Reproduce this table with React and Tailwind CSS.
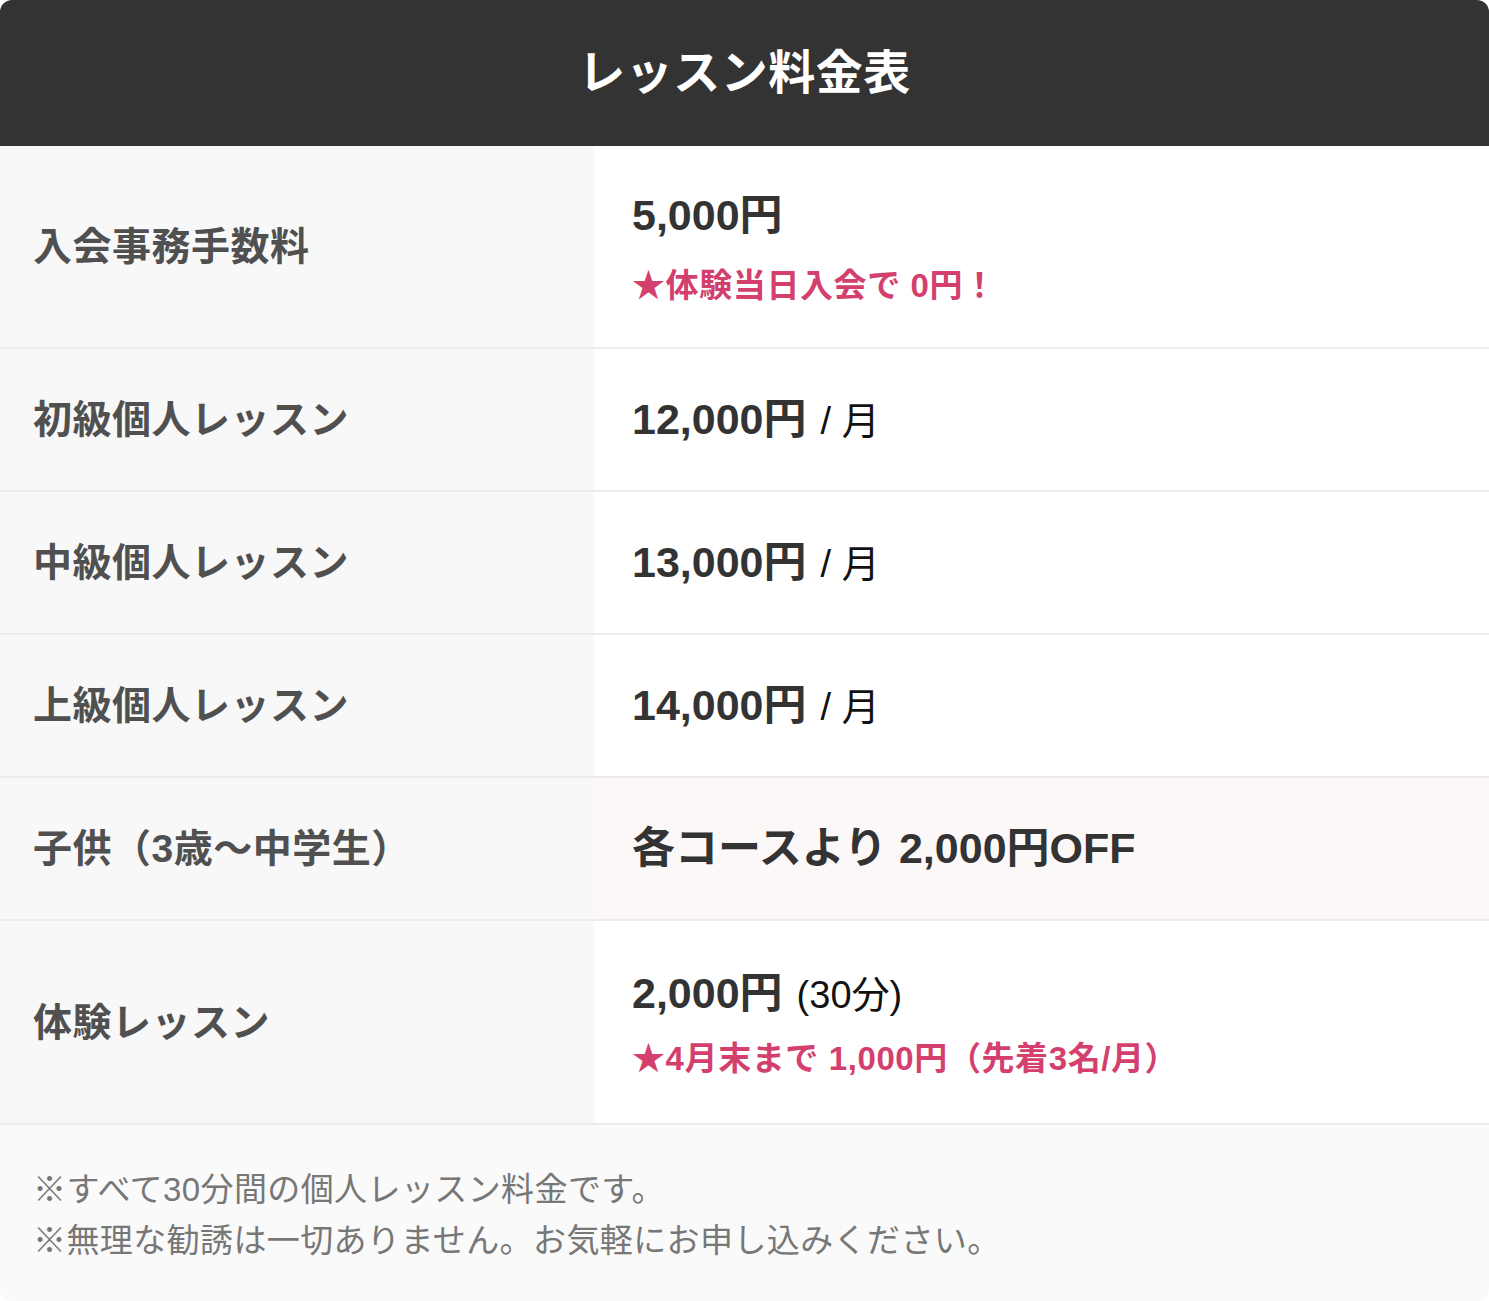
const font = { fontFamily: '"Liberation Sans", "Noto Sans CJK JP", sans-serif' };

const rows = [
  { label: "入会事務手数料", price: "5,000円", note: "★体験当日入会で 0円！", h: "h-[203px]", gap: "mt-[14px]" },
  { label: "初級個人レッスン", price: "12,000円", unit: "/ 月", h: "h-[143px]" },
  { label: "中級個人レッスン", price: "13,000円", unit: "/ 月", h: "h-[143px]" },
  { label: "上級個人レッスン", price: "14,000円", unit: "/ 月", h: "h-[143px]" },
  { label: "子供（3歳〜中学生）", price: "各コースより 2,000円OFF", h: "h-[143px]", pink: true },
  { label: "体験レッスン", price: "2,000円", unit: "(30分)", note: "★4月末まで 1,000円（先着3名/月）", h: "h-[204px]", gap: "mt-[9px]" },
];

function Row({ row }) {
  return (
    <div className={`flex border-b-2 border-[#ececec] ${row.h}`}>
      {/* label */}
      <div className="w-[594px] shrink-0 bg-[#f8f8f8] flex items-center pl-[33px]">
        <p className="text-[39px] font-bold text-[#505050] leading-none tracking-[0.5px]">{row.label}</p>
      </div>
      {/* value */}
      <div className={`flex-1 flex flex-col justify-center pl-[38px] ${row.pink ? "bg-[#fdf8f8]" : "bg-white"}`}>
        <p className="text-[43px] font-bold text-[#333] leading-[1.5]">
          {row.price}
          {row.unit && (
            <span className="font-normal text-[38px] text-[#111] ml-[14px]">{row.unit}</span>
          )}
        </p>
        {row.note && (
          <p className={`${row.gap} text-[33px] font-bold text-[#d4406e] leading-[1.5] tracking-[0.6px]`}>{row.note}</p>
        )}
      </div>
    </div>
  );
}

export default function App() {
  return (
    <div className="w-[1489px] bg-white" style={font}>
      <div className="rounded-[12px] overflow-hidden">
        {/* heading */}
        <div className="h-[146px] bg-[#333333] flex items-center justify-center">
          <h1 className="text-[47px] font-bold text-white tracking-[0.5px]">レッスン料金表</h1>
        </div>
        {/* price rows */}
        {rows.map((row) => (
          <Row key={row.label} row={row} />
        ))}
        {/* notes */}
        <div className="h-[176px] bg-[#fafafa] pl-[33px] pt-[39px] text-[33px] text-[#777] leading-[51px] tracking-[0.4px]">
          <p>※すべて30分間の個人レッスン料金です。</p>
          <p>※無理な勧誘は一切ありません。お気軽にお申し込みください。</p>
        </div>
      </div>
    </div>
  );
}
